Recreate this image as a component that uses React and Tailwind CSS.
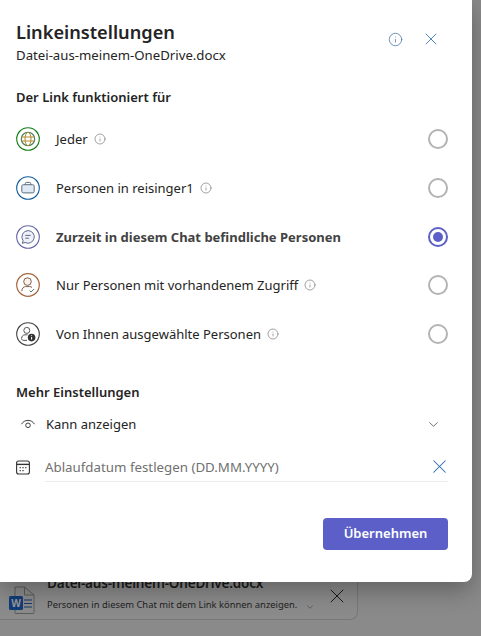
import React from "react";
import { ChevronDown, X, Info } from "lucide-react";

const font = "font-['Noto_Sans','Open_Sans',sans-serif]";

const GlobeIcon = () => (
    <svg width="24" height="24" viewBox="0 0 24 24" fill="none">
        <circle cx="12" cy="12" r="11.3" stroke="#107c10" strokeWidth="1.1" />
        <circle cx="12" cy="12" r="6.7" stroke="#3f7d55" strokeWidth="1.1" />
        <ellipse cx="12" cy="12" rx="3" ry="6.7" stroke="#b58a2a" strokeWidth="1" />
        <path d="M5.5 10h13M5.5 14h13" stroke="#b58a2a" strokeWidth="1" />
    </svg>
);

const BagIcon = () => (
    <svg width="24" height="24" viewBox="0 0 24 24" fill="none">
        <circle cx="12" cy="12" r="11.3" stroke="#0f5c9c" strokeWidth="1.1" />
        <rect x="5.8" y="8.7" width="12.4" height="8.2" rx="1.6" fill="#dfeaf4" stroke="#5a6b7c" />
        <path d="M9.3 8.5V7.6a1.2 1.2 0 0 1 1.2-1.2h3a1.2 1.2 0 0 1 1.2 1.2v.9" stroke="#5a6b7c" />
    </svg>
);

const ChatIcon = () => (
    <svg width="24" height="24" viewBox="0 0 24 24" fill="none">
        <circle cx="12" cy="12" r="11.3" stroke="#6264a7" strokeWidth="1.1" />
        <path d="M12 5.6a6.3 6.3 0 1 1-2.9 11.9l-2.8.8.8-2.7A6.3 6.3 0 0 1 12 5.6Z" fill="#eef0fa" stroke="#5f6a8a" />
        <path d="M9.3 10.4h5.4M9.3 13.2h3.6" stroke="#5f6a8a" />
    </svg>
);

const PersonCheckIcon = () => (
    <svg width="24" height="24" viewBox="0 0 24 24" fill="none">
        <circle cx="12" cy="12" r="11.3" stroke="#a5673f" strokeWidth="1.2" />
        <circle cx="11.5" cy="8.6" r="3.8" fill="#fbf1ea" stroke="#7d5f4d" />
        <path d="M5.8 18.2c0-3 2-4.6 3.7-4.6h4.2c.9 0 1.7.3 2.3.9" stroke="#7d5f4d" />
        <path d="M13.6 17.6l1.5 1.4 3-3" stroke="#4f7560" />
    </svg>
);

const PersonInfoIcon = () => (
    <svg width="24" height="24" viewBox="0 0 24 24" fill="none">
        <circle cx="12" cy="12" r="11.3" stroke="#424242" strokeWidth="1.1" />
        <circle cx="10.8" cy="8.4" r="3" stroke="#555" />
        <path d="M5.6 16.6c0-2.4 1.6-3.8 3.4-3.8h2.6" stroke="#555" />
        <path d="M5.6 16.6c0 1.2 1 1.8 2.4 1.8h3" stroke="#555" />
        <circle cx="15.6" cy="15.6" r="3.8" fill="#333" />
        <path d="M15.6 14.9v2.6M15.6 13.3v.7" stroke="#fff" />
    </svg>
);

const EyeIcon = () => (
    <svg width="16" height="16" viewBox="0 0 16 16" fill="none" stroke="#404040" strokeWidth="1">
        <path d="M1.5 8.2C3 5.6 5.3 4.4 8 4.4s5 1.2 6.5 3.8" />
        <circle cx="8" cy="9.3" r="2.3" />
    </svg>
);

const CalendarIcon = () => (
    <svg width="14" height="15" viewBox="0 0 14 15" fill="none">
        <rect x="0.6" y="1" width="12.8" height="13" rx="2" stroke="#333" strokeWidth="1.1" />
        <path d="M1 4.4h12" stroke="#333" strokeWidth="1.4" />
        <path d="M3.6 7.6h1.2M6.4 7.6h1.2M9.2 7.6h1.2M3.6 10.6h1.2M6.4 10.6h1.2" stroke="#333" strokeWidth="1.2" />
    </svg>
);

const WordIcon = () => (
    <svg width="28" height="28" viewBox="0 0 28 28" fill="none">
        <path d="M6 1h9.5L25 9v17.5a1 1 0 0 1-1 1H7a1 1 0 0 1-1-1V1Z" stroke="#5c5c5c" />
        <path d="M15.5 1v8H25" stroke="#5c5c5c" />
        <path d="M15 14h8M15 17.5h8M15 21h8" stroke="#17396e" strokeWidth="1" />
        <rect x="0" y="10" width="14" height="14" rx="1.5" fill="#123c7a" />
        <text x="7" y="21" textAnchor="middle" fontSize="10" fontWeight="700" fill="#9a9a9a" fontFamily="Noto Sans, sans-serif">
            W
        </text>
    </svg>
);

const InfoDot = () => <Info size={12} strokeWidth={1.4} className="text-[#7a7a7a] shrink-0" />;

const options = [
    { icon: <GlobeIcon />, label: "Jeder", info: true },
    { icon: <BagIcon />, label: "Personen in reisinger1", info: true },
    { icon: <ChatIcon />, label: "Zurzeit in diesem Chat befindliche Personen", selected: true },
    { icon: <PersonCheckIcon />, label: "Nur Personen mit vorhandenem Zugriff", info: true },
    { icon: <PersonInfoIcon />, label: "Von Ihnen ausgewählte Personen", info: true },
];

const Radio = ({ selected }) =>
    selected ? (
        <span className="w-5 h-5 rounded-full border-2 border-[#5b5fc7] flex items-center justify-center">
            <span className="w-[10px] h-[10px] rounded-full bg-[#5b5fc7]" />
        </span>
    ) : (
        <span className="block w-5 h-5 rounded-full border-2 border-[#b3b3b3]" />
    );

export default function App() {
    return (
        <div className={`relative w-[481px] h-[636px] overflow-hidden bg-[#8a8a8a] flex flex-col justify-end pb-4 ${font}`}>
            {/* attachment card behind the dialog */}
            <div className="w-[358px] h-[72px] rounded-br-lg border-b border-r border-[#777] bg-[#8b8b8b] flex items-end pl-[9px] pb-[5px]">
                <WordIcon />
                <div className="ml-[10px] w-[258px] flex flex-col">
                    <span className="text-[13.5px] leading-[20px] font-semibold text-[#1a1a1a] tracking-[-0.2px] whitespace-nowrap">
                        Datei-aus-meinem-OneDrive.docx
                    </span>
                    <span className="text-[9.4px] leading-[16px] mt-[4px] mb-[1px] text-[#222] whitespace-nowrap">
                        Personen in diesem Chat mit dem Link können anzeigen.
                    </span>
                </div>
                <ChevronDown size={10} className="text-[#555] mb-[2px]" />
                <X size={24} strokeWidth={1} className="text-[#1a1a1a] ml-[10px] mb-[6px]" />
            </div>

            {/* dialog */}
            <div className="absolute top-0 left-0 w-[472px] h-[582px] bg-white rounded-br-lg shadow-[0_8px_24px_rgba(0,0,0,0.3)] flex flex-col pl-4 pr-6 text-[#242424]">
                <div className="flex justify-between pt-[19px]">
                    <div className="flex flex-col">
                        <h1 className="text-[18.2px] leading-[26px] font-semibold">Linkeinstellungen</h1>
                        <p className="text-[13.2px] leading-[18px] mt-[1px]">Datei-aus-meinem-OneDrive.docx</p>
                    </div>
                    <div className="flex items-center gap-[18px] h-[40px] mr-[7px]">
                        <Info size={15} strokeWidth={1.2} className="text-[#3f6f9e]" />
                        <X size={20} strokeWidth={1} className="text-[#2a6cae]" />
                    </div>
                </div>

                <h2 className="text-[13px] leading-[18px] font-semibold mt-6">Der Link funktioniert für</h2>

                <ul className="flex flex-col gap-[24.75px] mt-[21px]">
                    {options.map((o) => (
                        <li key={o.label} className="flex items-center h-6">
                            {o.icon}
                            <span className={`ml-4 text-[13px] leading-[18px] ${o.selected ? "font-bold text-[#424242]" : ""}`}>
                                {o.label}
                            </span>
                            {o.info && <span className="ml-[6px]"><InfoDot /></span>}
                            <span className="ml-auto">
                                <Radio selected={o.selected} />
                            </span>
                        </li>
                    ))}
                </ul>

                <h2 className="text-[13px] leading-[18px] font-semibold mt-[37px]">Mehr Einstellungen</h2>

                <div className="flex items-center h-6 mt-[11px]">
                    <span className="ml-1"><EyeIcon /></span>
                    <span className="ml-[10px] text-[13px] leading-[18px]">Kann anzeigen</span>
                    <ChevronDown size={15} strokeWidth={1.2} className="ml-auto mr-[7px] text-[#444]" />
                </div>

                <div className="flex items-center mt-4">
                    <CalendarIcon />
                    <div className="ml-[15px] flex-1 flex items-center h-[30px] border-b border-[#ececec]">
                        <span className="text-[13.3px] leading-[18px] text-[#707070]">Ablaufdatum festlegen (DD.MM.YYYY)</span>
                        <X size={23} strokeWidth={1.1} className="ml-auto mr-[-3px] text-[#2a6cae]" />
                    </div>
                </div>

                <div className="flex justify-end mt-[36px]">
                    <button className="w-[125px] h-8 rounded bg-[#5b5fc7] text-white text-[13px] font-semibold">
                        Übernehmen
                    </button>
                </div>
            </div>
        </div>
    );
}
